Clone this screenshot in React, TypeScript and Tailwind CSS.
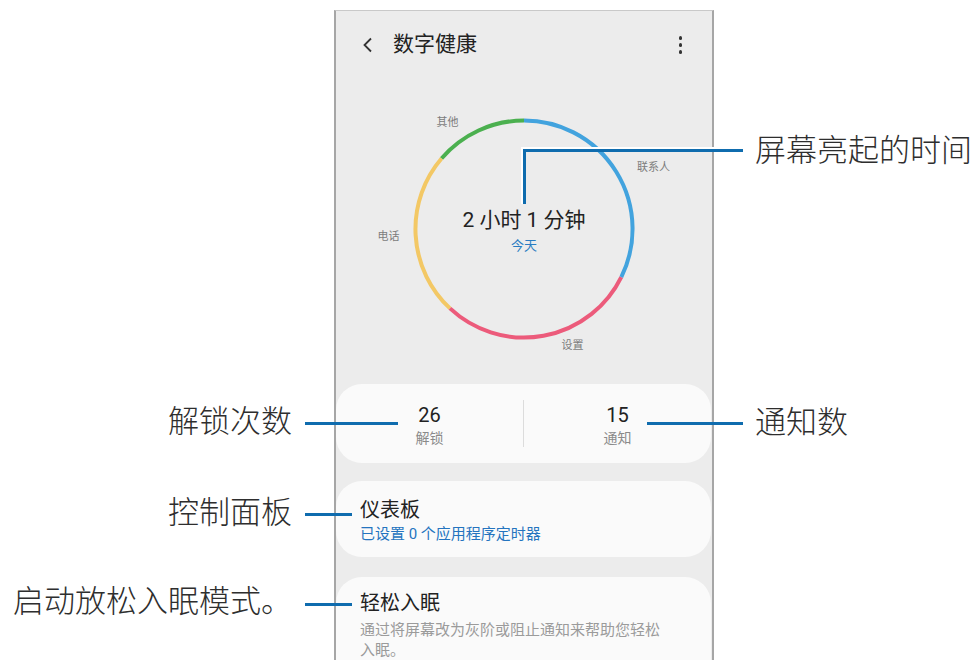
export default function App() {
  return (
    <div className="relative w-[978px] h-[660px] overflow-hidden bg-white font-['Roboto','Noto_Sans_CJK_SC',sans-serif]">
      {/* phone screen */}
      <div className="pl-[334px] pt-[10px]">
        <div className="w-[380px] h-[650px] border-x-2 border-t border-x-[#a6a6a6] border-t-[#c9c9c9] bg-[#ececec] flex flex-col overflow-hidden">
          {/* header */}
          <div className="h-[68px] flex items-center pl-[26px] pr-[30px]">
            <svg width="12" height="16" viewBox="0 0 12 16">
              <polyline points="9,1.5 2.5,8 9,14.5" fill="none" stroke="#333" strokeWidth="1.8" />
            </svg>
            <span className="ml-[19px] text-[21px] text-[#222]">数字健康</span>
            <div className="ml-auto flex flex-col gap-[3.5px]">
              <span className="w-[3.5px] h-[3.5px] rounded-full bg-[#333]" />
              <span className="w-[3.5px] h-[3.5px] rounded-full bg-[#333]" />
              <span className="w-[3.5px] h-[3.5px] rounded-full bg-[#333]" />
            </div>
          </div>

          {/* usage ring */}
          <svg width="376" height="305" viewBox="0 0 376 305" className="shrink-0">
            <g fill="none" strokeWidth="4">
              <path d="M188 41.5 A108.5 108.5 0 0 0 105.5 79.5" stroke="#4bb04f" />
              <path d="M105.5 79.5 A108.5 108.5 0 0 0 114 229.4" stroke="#f3c865" />
              <path d="M114 229.4 A108.5 108.5 0 0 0 285.3 198.1" stroke="#ec5b7b" />
              <path d="M285.3 198.1 A108.5 108.5 0 0 0 188 41.5" stroke="#42a3de" />
            </g>
            <g fontSize="11" fill="#7c7c7c" textAnchor="middle" dominantBaseline="central">
              <text x="111.5" y="43">其他</text>
              <text x="317.5" y="88">联系人</text>
              <text x="52.5" y="157">电话</text>
              <text x="236.5" y="266">设置</text>
            </g>
            <text x="188" y="141" fontSize="21" fill="#222" textAnchor="middle" dominantBaseline="central">2 小时 1 分钟</text>
            <text x="188" y="166" fontSize="13" fill="#2a7cc2" textAnchor="middle" dominantBaseline="central">今天</text>
          </svg>

          {/* unlocks / notifications */}
          <div className="mr-[1px] h-[79px] shrink-0 rounded-[26px] bg-[#fafafa] flex">
            <div className="flex-1 flex flex-col items-center pt-[19px]">
              <span className="text-[20px] leading-[24px] text-[#222]">26</span>
              <span className="mt-[2px] text-[14px] leading-[18px] text-[#8a8a8a]">解锁</span>
            </div>
            <div className="w-px h-[47px] mt-[16px] bg-[#dcdcdc]" />
            <div className="flex-1 flex flex-col items-center pt-[19px]">
              <span className="text-[20px] leading-[24px] text-[#222]">15</span>
              <span className="mt-[2px] text-[14px] leading-[18px] text-[#8a8a8a]">通知</span>
            </div>
          </div>

          {/* dashboard */}
          <div className="mt-[18px] mr-[1px] h-[76px] shrink-0 rounded-[26px] bg-[#fafafa] px-[24px] pt-[17px]">
            <div className="text-[20px] leading-[24px] text-[#222]">仪表板</div>
            <div className="mt-[2px] text-[15px] leading-[20px] text-[#2474bf]">已设置 0 个应用程序定时器</div>
          </div>

          {/* wind down */}
          <div className="mt-[20px] mr-[1px] flex-1 rounded-t-[26px] bg-[#fafafa] px-[24px] pt-[14px]">
            <div className="text-[20px] leading-[24px] text-[#222]">轻松入眠</div>
            <div className="mt-[5px] w-[306px] text-[15px] leading-[20px] text-[#9b9b9b]">
              通过将屏幕改为灰阶或阻止通知来帮助您轻松入眠。
            </div>
          </div>
        </div>
      </div>

      {/* callouts */}
      <div className="absolute left-[521px] top-[147px] w-[222px] h-[57px] border-l-2 border-t-2 border-white">
        <div className="w-full h-full border-l-[3px] border-t-[3px] border-[#0f6cae]" />
      </div>
      <span className="absolute left-[755px] top-[133px] text-[31px] leading-[36px] font-light text-[#2e2e2e]">屏幕亮起的时间</span>

      <div className="absolute left-[647px] top-[422px] w-[96px] h-[3px] bg-[#0f6cae]" />
      <span className="absolute left-[755px] top-[405px] text-[31px] leading-[36px] font-light text-[#2e2e2e]">通知数</span>

      <div className="absolute left-[305px] top-[422px] w-[93px] h-[3px] bg-[#0f6cae]" />
      <span className="absolute right-[686px] top-[404px] text-[31px] leading-[36px] font-light text-[#2e2e2e]">解锁次数</span>

      <div className="absolute left-[305px] top-[513px] w-[47px] h-[3px] bg-[#0f6cae]" />
      <span className="absolute right-[686px] top-[495px] text-[31px] leading-[36px] font-light text-[#2e2e2e]">控制面板</span>

      <div className="absolute left-[305px] top-[603px] w-[47px] h-[3px] bg-[#0f6cae]" />
      <span className="absolute right-[686px] top-[584px] whitespace-nowrap text-[31px] leading-[36px] font-light text-[#2e2e2e]">启动放松入眠模式。</span>
    </div>
  );
}
